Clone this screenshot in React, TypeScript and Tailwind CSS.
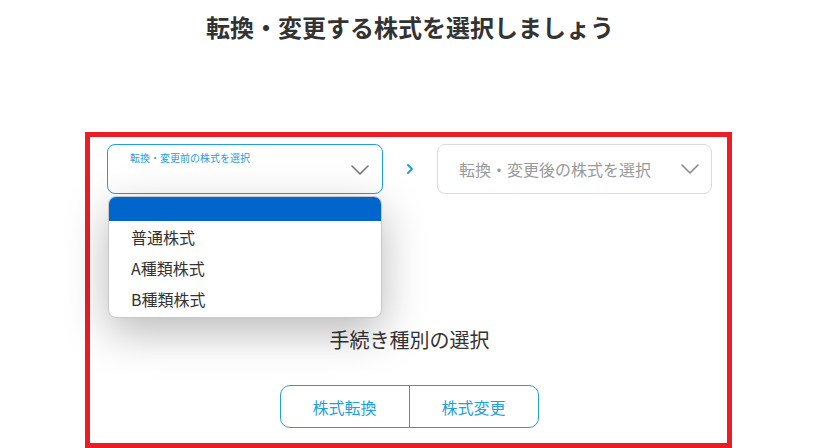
import { ChevronRight } from 'lucide-react';

const font = { fontFamily: '"Noto Sans CJK JP", "Noto Sans", sans-serif' };

const options = ['普通株式', 'A種類株式', 'B種類株式'];

const Chevron = ({ className }: { className?: string }) => (
  <svg viewBox="0 0 18 10" className={className} fill="none" stroke="currentColor" strokeWidth={1.6} strokeLinecap="round" strokeLinejoin="round">
    <polyline points="1,1 9,9 17,1" />
  </svg>
);

export default function App() {
  return (
    <div className="w-[820px] h-[448px] bg-white overflow-hidden text-[#333]" style={font}>
      {/* Heading */}
      <h1 className="pt-[9px] text-center text-[24px] leading-[36px] font-bold text-[#333]">
        転換・変更する株式を選択しましょう
      </h1>

      {/* Highlighted area */}
      <div className="mt-[87px] ml-[85px] w-[647px] h-[316px] border-[5px] border-[#ec1c24] pt-[7px] pl-[17px] pr-[15px]">
        <div className="flex items-center">
          {/* Before select (open) */}
          <div className="relative w-[276px]">
            <div className="h-[50px] rounded-[8px] border border-[#1fa0dc] bg-white relative">
              <span className="absolute left-[22px] top-[6px] text-[10px] leading-[14px] text-[#1fa0dc]">
                転換・変更前の株式を選択
              </span>
              <Chevron className="absolute right-[13px] top-[20px] w-[18px] h-[10px] text-[#777]" />
            </div>
            {/* Dropdown list */}
            <div className="absolute left-[1px] top-[52px] w-[274px] bg-white rounded-[8px] border border-[#c8c8c8] overflow-hidden shadow-[0_14px_44px_rgba(0,0,0,0.28)] z-10">
              <div className="h-[24px] bg-[#0066cc]" />
              <ul className="pb-[3px]">
                {options.map((o) => (
                  <li key={o} className="h-[31px] pl-[22px] flex items-center text-[16px] text-[#333]">
                    {o}
                  </li>
                ))}
              </ul>
            </div>
          </div>

          {/* Arrow */}
          <div className="w-[54px] flex justify-center">
            <ChevronRight className="w-[16px] h-[16px] text-[#1fa0dc]" strokeWidth={3} />
          </div>

          {/* After select */}
          <div className="w-[275px] h-[50px] rounded-[8px] border border-[#dcdcdc] bg-white flex items-center pl-[21px] pr-[12px]">
            <span className="flex-1 text-[16px] text-[#999]">転換・変更後の株式を選択</span>
            <Chevron className="w-[18px] h-[10px] text-[#888]" />
          </div>
        </div>

        {/* Procedure type */}
        <p className="mt-[131px] text-center text-[20px] leading-[30px] text-[#333]">手続き種別の選択</p>

        <div className="mt-[30px] flex justify-center -ml-[1px]">
          <div className="flex h-[43px] w-[259px] rounded-[10px] border border-[#1fa0dc] overflow-hidden">
            <button className="flex-1 border-r border-[#1fa0dc] text-[16px] text-[#1fa0dc]">株式転換</button>
            <button className="flex-1 text-[16px] text-[#1fa0dc]">株式変更</button>
          </div>
        </div>
      </div>
    </div>
  );
}
